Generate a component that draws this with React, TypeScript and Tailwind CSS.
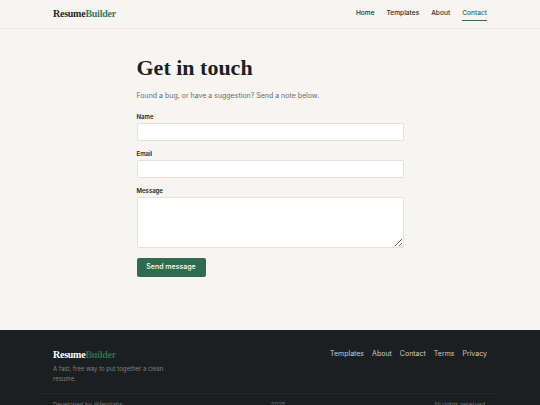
const navLinks = ['Home', 'Templates', 'About', 'Contact'];
const footerLinks = ['Templates', 'About', 'Contact', 'Terms', 'Privacy'];

const serif = "font-['Liberation_Serif',serif]";

function Logo({ dark }: { dark?: boolean }) {
  return (
    <div className={`${serif} text-[10px] font-bold leading-[12px] tracking-tight`}>
      <span className={dark ? 'text-white' : 'text-[#1f2321]'}>Resume</span>
      <span className={dark ? 'text-[#2f6b4f]' : 'text-[#3f7a5f]'}>Builder</span>
    </div>
  );
}

export default function App() {
  return (
    <div className="min-h-[405px] bg-[#f6f5f2] font-['Inter',sans-serif] text-[#1f2321]">
      {/* Header */}
      <header className="h-[29px] border-b border-[#ebe8e3]">
        <div className="mx-[53px] flex h-full items-center justify-between">
          <Logo />
          <nav className="flex items-center gap-[12px] text-[6.6px] font-medium">
            {navLinks.map((l) => (
              <a
                key={l}
                className={
                  l === 'Contact'
                    ? 'border-b border-[#2f6b4f] pt-[2px] pb-[1px] text-[#2f6b4f]'
                    : 'text-[#2a2e2c]'
                }
              >
                {l}
              </a>
            ))}
          </nav>
        </div>
      </header>

      {/* Contact form */}
      <main className="mx-auto w-[267px] pt-[25px] pb-[53px]">
        <h1 className={`${serif} text-[22px] font-bold leading-[28px] text-[#1c1f1e]`}>
          Get in touch
        </h1>
        <p className="mt-[9px] text-[7px] text-[#6d6d6a]">
          Found a bug, or have a suggestion? Send a note below.
        </p>

        <form className="mt-[11px] flex flex-col">
          <label className="text-[6px] font-semibold leading-[8px]">Name</label>
          <input className="mt-[2px] h-[18px] rounded-[2px] border border-[#e5e2dd] bg-white" />

          <label className="mt-[9px] text-[6px] font-semibold leading-[8px]">Email</label>
          <input className="mt-[2px] h-[18px] rounded-[2px] border border-[#e5e2dd] bg-white" />

          <label className="mt-[9px] text-[6px] font-semibold leading-[8px]">Message</label>
          <textarea className="mt-[2px] h-[51px] rounded-[2px] border border-[#e5e2dd] bg-white" />

          <button
            type="button"
            className="mt-[10px] h-[19px] w-[69px] rounded-[2px] bg-[#2f6b4f] text-[7px] font-medium text-white"
          >
            Send message
          </button>
        </form>
      </main>

      {/* Footer */}
      <footer className="bg-[#1c1f21] pt-[18px]">
        <div className="mx-[53px] flex justify-between">
          <div className="w-[120px] pt-[1px]">
            <Logo dark />
            <p className="mt-[3px] text-[6px] leading-[10px] text-[#7d8180]">
              A fast, free way to put together a clean resume.
            </p>
          </div>
          <nav className="flex gap-[8px] text-[7px] leading-[12px] text-[#c9cccb]">
            {footerLinks.map((l) => (
              <a key={l}>{l}</a>
            ))}
          </nav>
        </div>
        <div className="mx-[41px] mt-[9px] border-t border-[#25292b]" />
        <div className="mx-[53px] flex justify-between pt-[7px] pb-[8px] text-[6px] leading-[8px] text-[#6f7372]">
          <span>Developed by @fernlabs</span>
          <span>2025</span>
          <span>All rights reserved.</span>
        </div>
      </footer>
    </div>
  );
}
